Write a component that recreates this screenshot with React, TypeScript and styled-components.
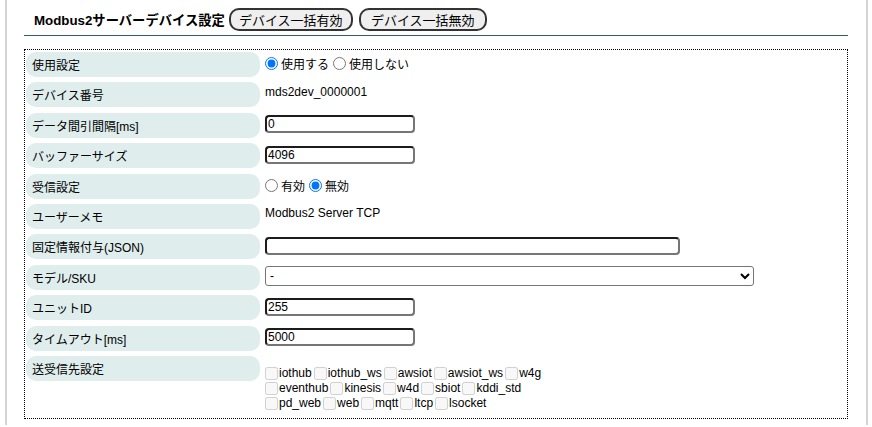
import styled, { createGlobalStyle } from 'styled-components';

const GlobalStyle = createGlobalStyle`
  html, body {
    margin: 0;
    padding: 0;
    background: #fff;
  }
  body {
    font-family: "Liberation Sans", Arial, "Noto Sans CJK JP", sans-serif;
    font-size: 12px;
    color: #000;
  }
`;

const TARGETS = [
  ['iothub', 'iothub_ws', 'awsiot', 'awsiot_ws', 'w4g'],
  ['eventhub', 'kinesis', 'w4d', 'sbiot', 'kddi_std'],
  ['pd_web', 'web', 'mqtt', 'ltcp', 'lsocket'],
];

const Page = styled.div`
  margin: 0 4px 0 5px;
  padding: 8px 18px 6px 17px;
  border-left: 2px solid #d4d4d4;
  border-right: 2px solid #d4d4d4;
`;

const Header = styled.div`
  display: flex;
  align-items: center;
  padding: 0 0 4px 10px;
  border-bottom: 1px solid #2f625d;
`;

const Title = styled.h2`
  margin: 0 4px 0 0;
  font-size: 13.3px;
  font-weight: bold;
`;

const HeadButton = styled.button<{ $w: number }>`
  width: ${(p) => p.$w}px;
  height: 23px;
  padding: 0;
  margin-right: 6px;
  font-family: inherit;
  font-size: 13px;
  color: #000;
  background: #efefef;
  border: 2px solid #333;
  border-radius: 10px;
`;

const Box = styled.div`
  margin-top: 13px;
  border: 1px dotted #000;
  padding: 2px 1px 5px 1px;
  display: grid;
  grid-template-columns: 234px 1fr;
  grid-auto-rows: minmax(25px, auto);
  row-gap: 5.4px;
`;

const Label = styled.div`
  align-self: start;
  height: 25px;
  display: flex;
  align-items: center;
  padding-left: 6px;
  background: #dfeded;
  border-radius: 10px;
`;

const Value = styled.div<{ $text?: boolean }>`
  display: flex;
  align-items: center;
  padding-left: 5px;
  padding-bottom: ${(p) => (p.$text ? '6px' : '2px')};
`;

const Radio = styled.input`
  margin: 0 3px 0 0;
  width: 13px;
  height: 13px;
`;

const RadioLabel = styled.label`
  display: inline-flex;
  align-items: center;
  margin-right: 4px;
`;

const TextInput = styled.input<{ $width: number }>`
  width: ${(p) => p.$width}px;
  height: 18px;
  box-sizing: border-box;
  padding: 0 1px;
  font-family: inherit;
  font-size: 12px;
  border: 2px solid;
  border-color: #1c1c1c #767676 #767676 #1c1c1c;
  border-radius: 4px;
  outline: none;
`;

const Select = styled.select`
  width: 489px;
  height: 20px;
  font-family: inherit;
  font-size: 12px;
  border: 1px solid #767676;
  border-radius: 3px;
  background: #fff;
  color: #000;
`;

const CheckArea = styled.div`
  display: flex;
  flex-direction: column;
  padding-top: 10px;
`;

const CheckRow = styled.div`
  display: flex;
  align-items: center;
  height: 15px;
`;

const CheckItem = styled.label`
  display: inline-flex;
  align-items: center;
  margin-right: 2px;
`;

const Check = styled.input`
  margin: 0 1px 0 0;
  width: 13px;
  height: 13px;
`;

export default function App() {
  return (
    <>
      <GlobalStyle />
      <Page>
        <Header>
          <Title>Modbus2サーバーデバイス設定</Title>
          <HeadButton $w={124}>デバイス一括有効</HeadButton>
          <HeadButton $w={128}>デバイス一括無効</HeadButton>
        </Header>
        <Box>
          <Label>使用設定</Label>
          <Value>
            <RadioLabel>
              <Radio type="radio" name="use" defaultChecked />
              使用する
            </RadioLabel>
            <RadioLabel>
              <Radio type="radio" name="use" />
              使用しない
            </RadioLabel>
          </Value>

          <Label>デバイス番号</Label>
          <Value $text>mds2dev_0000001</Value>

          <FieldRow label="データ間引間隔[ms]" width={150} value="0" />
          <FieldRow label="バッファーサイズ" width={150} value="4096" />

          <Label>受信設定</Label>
          <Value>
            <RadioLabel>
              <Radio type="radio" name="recv" />
              有効
            </RadioLabel>
            <RadioLabel>
              <Radio type="radio" name="recv" defaultChecked />
              無効
            </RadioLabel>
          </Value>

          <Label>ユーザーメモ</Label>
          <Value $text>Modbus2 Server TCP</Value>

          <FieldRow label="固定情報付与(JSON)" width={415} value="" />

          <Label>モデル/SKU</Label>
          <Value>
            <Select defaultValue="-">
              <option value="-">-</option>
            </Select>
          </Value>

          <FieldRow label="ユニットID" width={150} value="255" />
          <FieldRow label="タイムアウト[ms]" width={150} value="5000" />

          <Label>送受信先設定</Label>
          <Value>
            <CheckArea>
              {TARGETS.map((row, i) => (
                <CheckRow key={i}>
                  {row.map((t) => (
                    <CheckItem key={t}>
                      <Check type="checkbox" disabled />
                      {t}
                    </CheckItem>
                  ))}
                </CheckRow>
              ))}
            </CheckArea>
          </Value>
        </Box>
      </Page>
    </>
  );
}

function FieldRow(props: { label: string; width: number; value: string }) {
  return (
    <>
      <Label>{props.label}</Label>
      <Value>
        <TextInput type="text" $width={props.width} defaultValue={props.value} />
      </Value>
    </>
  );
}
